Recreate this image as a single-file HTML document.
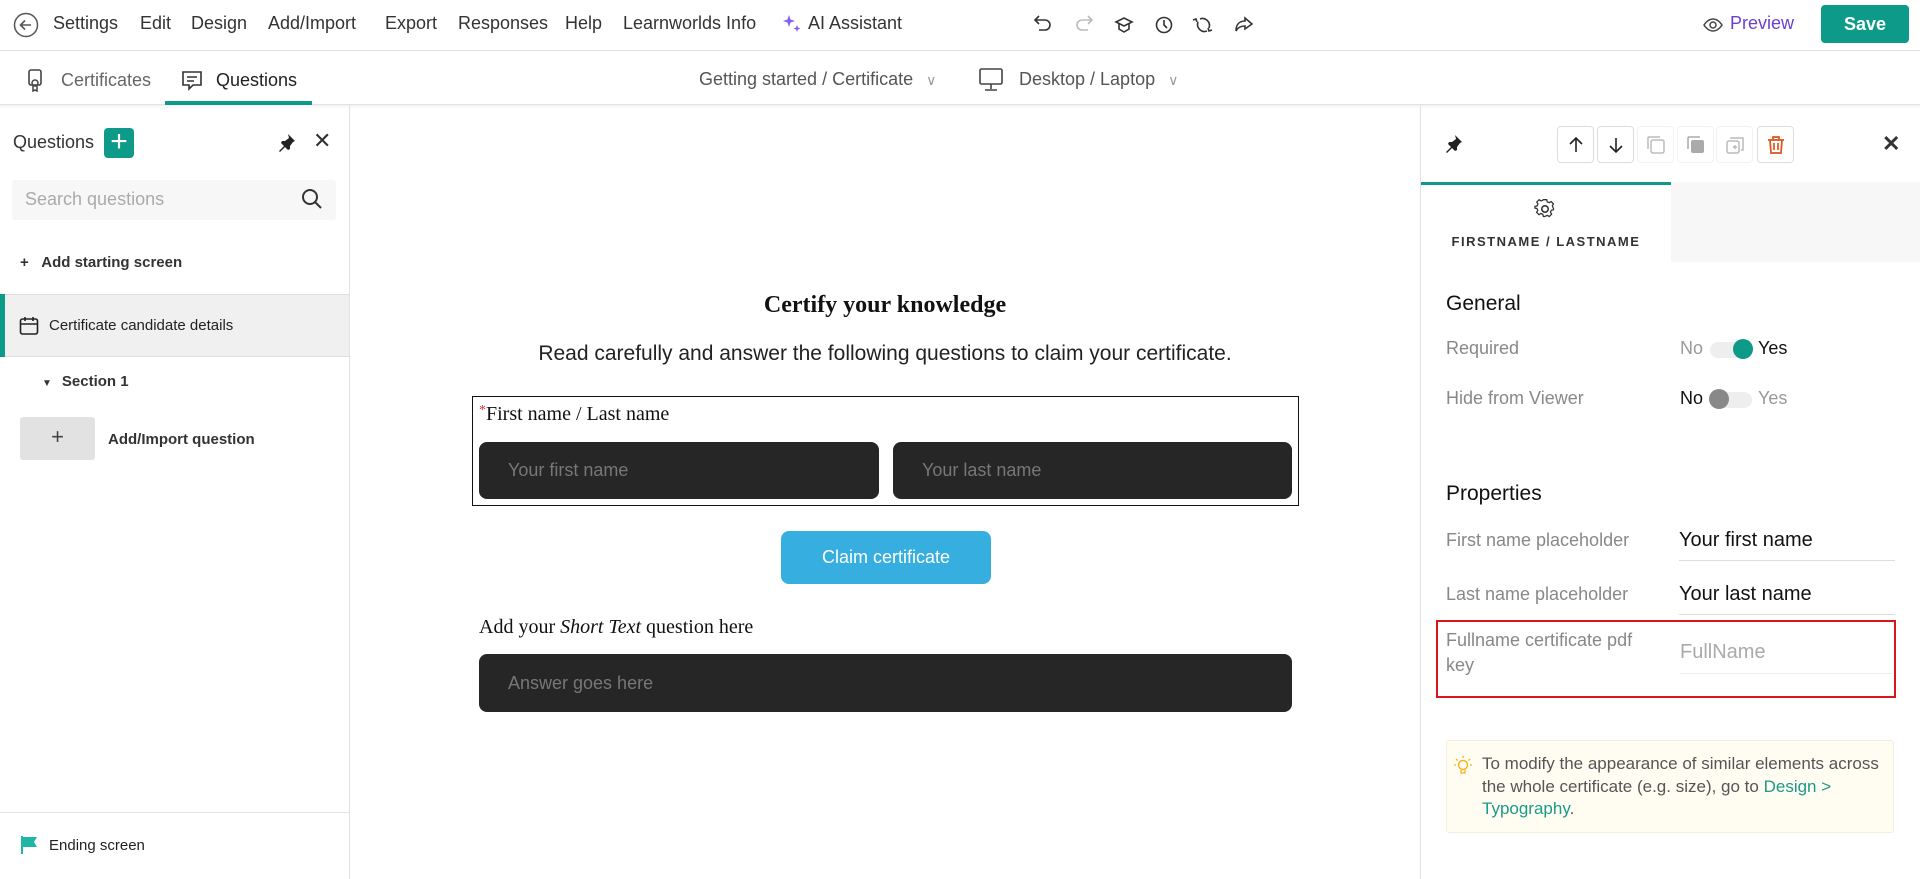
<!DOCTYPE html>
<html><head><meta charset="utf-8"><style>
*{box-sizing:border-box;margin:0;padding:0}
body{width:1920px;height:879px;overflow:hidden;background:#fff;font-family:"Liberation Sans",sans-serif;color:#333;position:relative}
.a{position:absolute}
.nv{position:absolute;top:13px;font-size:18px;color:#333;white-space:nowrap}
.serif{font-family:"Liberation Serif",serif}
svg{display:block}
.tb{position:absolute;top:126px;width:37px;height:37px;border:1px solid #ddd;border-radius:4px;display:flex;align-items:center;justify-content:center}
</style></head><body>

<!-- top bar -->
<div class="a" style="left:0;top:0;width:1920px;height:51px;border-bottom:1px solid #e2e2e2"></div>
<svg class="a" style="left:13px;top:12px" width="26" height="26" viewBox="0 0 26 26"><circle cx="13" cy="13" r="11.5" fill="none" stroke="#555" stroke-width="1.5"/><path d="M18 13H8M12 8.5L7.5 13 12 17.5" fill="none" stroke="#555" stroke-width="1.6"/></svg>
<div class="nv" style="left:53px">Settings</div>
<div class="nv" style="left:140px">Edit</div>
<div class="nv" style="left:191px">Design</div>
<div class="nv" style="left:268px">Add/Import</div>
<div class="nv" style="left:385px">Export</div>
<div class="nv" style="left:458px">Responses</div>
<div class="nv" style="left:565px">Help</div>
<div class="nv" style="left:623px">Learnworlds Info</div>
<svg class="a" style="left:781px;top:13px" width="22" height="22" viewBox="0 0 22 22"><path d="M8 2l1.5 4.5L14 8l-4.5 1.5L8 14 6.5 9.5 2 8l4.5-1.5z M16 12l1 2.5 2.5 1-2.5 1-1 2.5-1-2.5-2.5-1 2.5-1z" fill="#8b5cf6"/></svg>
<div class="a" style="left:808px;top:13px;font-size:18px">AI Assistant</div>
<svg class="a" style="left:1032px;top:14px" width="240" height="22" viewBox="0 0 240 22" fill="none" stroke-width="1.6">
<path d="M4 6h9a5 5 0 010 10H7M7 2L3 6l4 4" stroke="#333"/>
<path d="M59 6h-9a5 5 0 000 10h6M56 2l4 4-4 4" stroke="#bbb"/>
<path d="M84 8l8-4 8 4-8 4zM87 10v5l5 3 5-3v-5" stroke="#333"/>
<circle cx="132" cy="11" r="7.5" stroke="#333"/><path d="M132 6v5l3 3" stroke="#333"/>
<path d="M168 5a7 7 0 019 9M175 17a7 7 0 01-9-9M176 14l1 3 3-1M165 8l-1-3-3 1" stroke="#333"/>
<path d="M220 10l-7-6v3c-6 0-9 4-9 10 2-4 5-5 9-5v3z" stroke="#333"/>
</svg>
<svg class="a" style="left:1703px;top:15px" width="20" height="20" viewBox="0 0 20 20"><path d="M1 10s3.5-6 9-6 9 6 9 6-3.5 6-9 6-9-6-9-6z" fill="none" stroke="#444" stroke-width="1.5"/><circle cx="10" cy="10" r="3" fill="none" stroke="#444" stroke-width="1.5"/></svg>
<div class="a" style="left:1730px;top:13px;font-size:18px;color:#6b3fd4">Preview</div>
<div class="a" style="left:1821px;top:5px;width:88px;height:38px;background:#0e9a88;border-radius:4px;color:#fff;font-weight:bold;font-size:18px;text-align:center;line-height:38px">Save</div>

<!-- second bar -->
<div class="a" style="left:0;top:51px;width:1920px;height:54px;border-bottom:1px solid #e2e2e2;box-shadow:0 2px 3px rgba(0,0,0,.05)"></div>
<svg class="a" style="left:28px;top:69px" width="14" height="24" viewBox="0 0 14 24"><rect x="1" y="1" width="12" height="15" rx="2" fill="none" stroke="#444" stroke-width="1.6"/><circle cx="7" cy="14" r="3" fill="none" stroke="#444" stroke-width="1.5"/><path d="M5 17v5l2-1 2 1v-5" fill="none" stroke="#444" stroke-width="1.5"/></svg>
<div class="a" style="left:61px;top:70px;font-size:18px;color:#666">Certificates</div>
<svg class="a" style="left:181px;top:69px" width="24" height="24" viewBox="0 0 24 24"><path d="M2 3h18v13h-8l-4 4v-4H2z" fill="none" stroke="#333" stroke-width="1.6"/><path d="M6 8h10M6 12h7" stroke="#333" stroke-width="1.5"/></svg>
<div class="a" style="left:216px;top:70px;font-size:18px;color:#222">Questions</div>
<div class="a" style="left:165px;top:101px;width:147px;height:4px;background:#0e9a88"></div>
<div class="a" style="left:699px;top:69px;font-size:18px;color:#555">Getting started / Certificate <span style="color:#999;font-size:14px;margin-left:8px">&#8744;</span></div>
<svg class="a" style="left:979px;top:67px" width="24" height="26" viewBox="0 0 24 26"><rect x="1" y="2" width="22" height="15" rx="1.5" fill="none" stroke="#444" stroke-width="1.6"/><path d="M12 17v5M6 23h12" stroke="#444" stroke-width="1.6"/></svg>
<div class="a" style="left:1019px;top:69px;font-size:18px;color:#555">Desktop / Laptop <span style="color:#999;font-size:14px;margin-left:8px">&#8744;</span></div>

<!-- left sidebar -->
<div class="a" style="left:349px;top:105px;width:1px;height:774px;background:#e2e2e2"></div>
<div class="a" style="left:13px;top:132px;font-size:18px;color:#333">Questions</div>
<div class="a" style="left:104px;top:128px;width:30px;height:30px;background:#0e9a88;border-radius:4px;color:#fff;font-size:30px;line-height:28px;text-align:center">+</div>
<svg class="a" style="left:276px;top:133px" width="20" height="20" viewBox="0 0 20 20"><path d="M12 1l7 7-2 1-3 4 0 3-2 1-3-3-5 5-1-1 5-5-3-3 1-2 3 0 4-3z" fill="#222"/></svg>
<div class="a" style="left:313px;top:128px;font-size:22px;color:#333">✕</div>
<div class="a" style="left:12px;top:180px;width:324px;height:40px;background:#f7f7f7;border-radius:3px"></div>
<div class="a" style="left:25px;top:189px;font-size:18px;color:#aaa">Search questions</div>
<svg class="a" style="left:300px;top:187px" width="24" height="24" viewBox="0 0 24 24"><circle cx="10" cy="10" r="7" fill="none" stroke="#333" stroke-width="2"/><path d="M15 15l6 6" stroke="#333" stroke-width="2"/></svg>
<div class="a" style="left:20px;top:254px;font-size:15px;font-weight:bold;color:#333">+&nbsp;&nbsp;&nbsp;Add starting screen</div>
<div class="a" style="left:0;top:294px;width:349px;height:63px;background:#f0f0f0;border-top:1px solid #ddd;border-bottom:1px solid #ddd"></div>
<div class="a" style="left:0;top:294px;width:5px;height:63px;background:#0e9a88"></div>
<svg class="a" style="left:19px;top:316px" width="20" height="20" viewBox="0 0 20 20"><rect x="1.5" y="3" width="17" height="15" rx="2" fill="none" stroke="#222" stroke-width="1.6"/><path d="M1.5 8h17M6 1v4M14 1v4" stroke="#222" stroke-width="1.6"/></svg>
<div class="a" style="left:49px;top:317px;font-size:15px;color:#222">Certificate candidate details</div>
<div class="a" style="left:42px;top:373px;font-size:15px;font-weight:bold;color:#333"><span style="font-size:10px;margin-right:10px">▼</span>Section 1</div>
<div class="a" style="left:20px;top:417px;width:75px;height:43px;background:#e2e2e2;border-radius:3px;text-align:center;font-size:22px;line-height:40px;color:#444">+</div>
<div class="a" style="left:108px;top:431px;font-size:15px;font-weight:bold;color:#333">Add/Import question</div>
<div class="a" style="left:0;top:812px;width:349px;height:1px;background:#e2e2e2"></div>
<svg class="a" style="left:20px;top:835px" width="20" height="20" viewBox="0 0 20 20"><path d="M2 1v18" stroke="#1fb6a6" stroke-width="2"/><path d="M3 2h14l-3 5 3 5H3z" fill="#1fb6a6"/></svg>
<div class="a" style="left:49px;top:837px;font-size:15px;color:#222">Ending screen</div>

<!-- canvas -->
<div class="a serif" style="left:350px;top:292px;width:1070px;text-align:center;font-size:24px;font-weight:bold;color:#111">Certify your knowledge</div>
<div class="a" style="left:350px;top:342px;width:1070px;text-align:center;font-size:21px;color:#222">Read carefully and answer the following questions to claim your certificate.</div>
<div class="a" style="left:472px;top:396px;width:827px;height:110px;border:1.5px solid #111"></div>
<div class="a serif" style="left:479px;top:403px;font-size:20px;color:#111"><span style="color:#d33;font-size:14px;vertical-align:top">*</span>First name / Last name</div>
<div class="a" style="left:479px;top:442px;width:400px;height:57px;background:#262626;border-radius:8px"></div>
<div class="a" style="left:508px;top:460px;font-size:18px;color:#777">Your first name</div>
<div class="a" style="left:893px;top:442px;width:399px;height:57px;background:#262626;border-radius:8px"></div>
<div class="a" style="left:922px;top:460px;font-size:18px;color:#777">Your last name</div>
<div class="a" style="left:781px;top:531px;width:210px;height:53px;background:#37aee0;border-radius:8px;color:#fff;text-align:center;line-height:53px;font-size:18px">Claim certificate</div>
<div class="a serif" style="left:479px;top:616px;font-size:20px;color:#111">Add your <i>Short Text</i> question here</div>
<div class="a" style="left:479px;top:654px;width:813px;height:58px;background:#262626;border-radius:8px"></div>
<div class="a" style="left:508px;top:673px;font-size:18px;color:#777">Answer goes here</div>

<!-- right panel -->
<div class="a" style="left:1420px;top:105px;width:1px;height:774px;background:#e2e2e2"></div>
<svg class="a" style="left:1443px;top:134px" width="20" height="20" viewBox="0 0 20 20"><path d="M12 1l7 7-2 1-3 4 0 3-2 1-3-3-5 5-1-1 5-5-3-3 1-2 3 0 4-3z" fill="#222"/></svg>
<div class="tb" style="left:1557px"><svg width="18" height="18" viewBox="0 0 18 18"><path d="M9 16V2M3 8l6-6 6 6" fill="none" stroke="#222" stroke-width="1.6"/></svg></div>
<div class="tb" style="left:1597px"><svg width="18" height="18" viewBox="0 0 18 18"><path d="M9 2v14M3 10l6 6 6-6" fill="none" stroke="#222" stroke-width="1.6"/></svg></div>
<div class="tb" style="left:1637px;border-color:#f2f2f2"><svg width="20" height="20" viewBox="0 0 20 20"><rect x="5" y="5" width="13" height="13" rx="2" fill="none" stroke="#bbb" stroke-width="1.5"/><path d="M2 14V3a1 1 0 011-1h11" fill="none" stroke="#bbb" stroke-width="1.5"/></svg></div>
<div class="tb" style="left:1677px;border-color:#f2f2f2"><svg width="20" height="20" viewBox="0 0 20 20"><rect x="5" y="5" width="13" height="13" rx="2" fill="#aaa"/><path d="M2 14V3a1 1 0 011-1h11" fill="none" stroke="#aaa" stroke-width="1.5"/></svg></div>
<div class="tb" style="left:1716px;border-color:#f2f2f2"><svg width="20" height="20" viewBox="0 0 20 20"><rect x="2" y="6" width="12" height="12" rx="2" fill="none" stroke="#bbb" stroke-width="1.5"/><path d="M6 4V3h12v12h-2M8 12h4M10 10v4" fill="none" stroke="#bbb" stroke-width="1.5"/></svg></div>
<div class="tb" style="left:1757px"><svg width="20" height="20" viewBox="0 0 20 20"><path d="M2 5h16M7 5V2h6v3M4 5l1 13h10l1-13M8 8v7M12 8v7" fill="none" stroke="#e0531f" stroke-width="1.7"/></svg></div>
<div class="a" style="left:1882px;top:131px;font-size:22px;color:#333;font-weight:bold">✕</div>
<div class="a" style="left:1421px;top:182px;width:250px;height:3px;background:#0e9a88"></div>
<div class="a" style="left:1671px;top:182px;width:249px;height:80px;background:#f7f7f7"></div>
<svg class="a" style="left:1534px;top:198px" width="22" height="22" viewBox="0 0 24 24"><circle cx="12" cy="12" r="3.5" fill="none" stroke="#333" stroke-width="1.7"/><path d="M10 2h4l.6 2.6 2.3 1 2.3-1.4 2.8 2.8-1.4 2.3 1 2.3L22 12v0l0 2-2.6.6-1 2.3 1.4 2.3-2.8 2.8-2.3-1.4-2.3 1L12 22h-2l-.6-2.6-2.3-1-2.3 1.4-2.8-2.8 1.4-2.3-1-2.3L0 12v-2l2.6-.6 1-2.3L2.2 4.8 5 2l2.3 1.4 2.3-1z" fill="none" stroke="#333" stroke-width="1.5" transform="translate(1 0) scale(.92)"/></svg>
<div class="a" style="left:1421px;top:234px;width:250px;text-align:center;font-size:13px;font-weight:bold;letter-spacing:1.5px;color:#333">FIRSTNAME / LASTNAME</div>
<div class="a" style="left:1446px;top:292px;font-size:21px;color:#111">General</div>
<div class="a" style="left:1446px;top:338px;font-size:18px;color:#888">Required</div>
<div class="a" style="left:1680px;top:338px;font-size:18px;color:#999">No</div>
<div class="a" style="left:1710px;top:342px;width:42px;height:16px;background:#eee;border-radius:8px"></div>
<div class="a" style="left:1733px;top:339px;width:20px;height:20px;background:#0e9a88;border-radius:50%"></div>
<div class="a" style="left:1758px;top:338px;font-size:18px;color:#111">Yes</div>
<div class="a" style="left:1446px;top:388px;font-size:18px;color:#888">Hide from Viewer</div>
<div class="a" style="left:1680px;top:388px;font-size:18px;color:#111">No</div>
<div class="a" style="left:1710px;top:392px;width:42px;height:16px;background:#eee;border-radius:8px"></div>
<div class="a" style="left:1709px;top:389px;width:20px;height:20px;background:#888;border-radius:50%"></div>
<div class="a" style="left:1758px;top:388px;font-size:18px;color:#999">Yes</div>
<div class="a" style="left:1446px;top:482px;font-size:21px;color:#111">Properties</div>
<div class="a" style="left:1446px;top:530px;font-size:18px;color:#888">First name placeholder</div>
<div class="a" style="left:1679px;top:529px;font-size:20px;color:#111">Your first name</div>
<div class="a" style="left:1679px;top:560px;width:216px;height:1px;background:#ddd"></div>
<div class="a" style="left:1446px;top:584px;font-size:18px;color:#888">Last name placeholder</div>
<div class="a" style="left:1679px;top:583px;font-size:20px;color:#111">Your last name</div>
<div class="a" style="left:1679px;top:614px;width:216px;height:1px;background:#ddd"></div>
<div class="a" style="left:1436px;top:620px;width:460px;height:78px;border:2px solid #d9161e"></div>
<div class="a" style="left:1446px;top:628px;font-size:18px;color:#888;line-height:25px;width:210px">Fullname certificate pdf key</div>
<div class="a" style="left:1680px;top:641px;font-size:20px;color:#aaa">FullName</div>
<div class="a" style="left:1680px;top:673px;width:212px;height:1px;background:#eee"></div>
<div class="a" style="left:1446px;top:740px;width:448px;height:93px;background:#fffdf2;border:1px solid #f3efdc;border-radius:3px"></div>
<svg class="a" style="left:1453px;top:755px" width="20" height="22" viewBox="0 0 20 22"><circle cx="10" cy="10" r="4.5" fill="none" stroke="#f3b31f" stroke-width="1.4"/><path d="M8 15v3h4v-3M10 1v2M3 4l1.5 1.5M17 4l-1.5 1.5M1 10h2M17 10h2" stroke="#f3b31f" stroke-width="1.3" fill="none"/></svg>
<div class="a" style="left:1482px;top:753px;width:408px;font-size:17px;line-height:22.5px;color:#555">To modify the appearance of similar elements across the whole certificate (e.g. size), go to <span style="color:#1a9a88">Design &gt; Typography</span>.</div>
</body></html>
